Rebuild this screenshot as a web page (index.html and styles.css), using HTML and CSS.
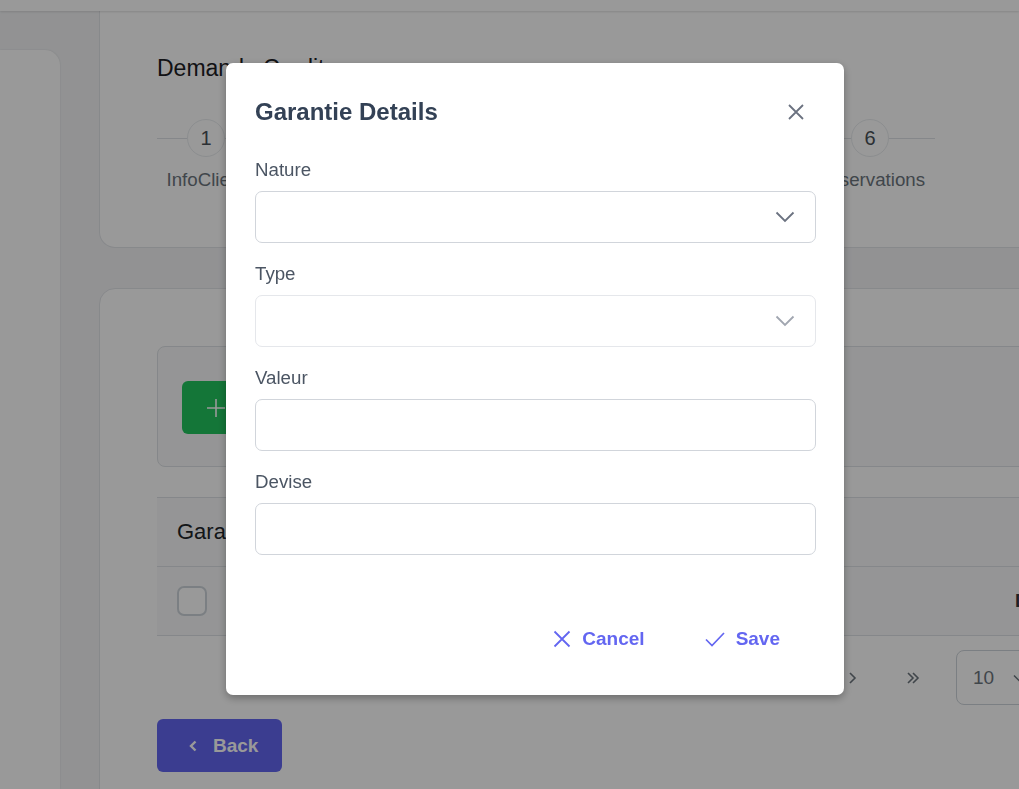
FILE: index.html
```html
<!DOCTYPE html>
<html lang="fr">
<head>
<meta charset="utf-8">
<title>Garantie Details</title>
<link rel="stylesheet" href="styles.css">
</head>
<body>
<header class="topbar"></header>
<div class="layout">
  <aside class="sidebar"></aside>
  <main class="main">
    <section class="card card-steps">
      <h1 class="page-title">Demande Credit</h1>
      <div class="stepper">
        <div class="step"><span class="step-num">1</span><span class="step-label">InfoClient</span></div>
        <div class="step"><span class="step-num">2</span><span class="step-label">Crédit</span></div>
        <div class="step"><span class="step-num">3</span><span class="step-label">Garanties</span></div>
        <div class="step"><span class="step-num">4</span><span class="step-label">Documents</span></div>
        <div class="step"><span class="step-num">5</span><span class="step-label">Validation</span></div>
        <div class="step"><span class="step-num">6</span><span class="step-label">Observations</span></div>
      </div>
    </section>

    <section class="card card-table">
      <div class="toolbar">
        <button class="btn-add">
          <svg width="20" height="20" viewBox="0 0 20 20"><path d="M10 1v18M1 10h18" stroke="currentColor" stroke-width="1.6" fill="none"/></svg>
          <span>Ajouter</span>
        </button>
      </div>
      <div class="table">
        <div class="table-caption">Garanties</div>
        <div class="table-head">
          <span class="checkbox"></span>
          <span class="th">Nature</span>
          <span class="th">Type</span>
          <span class="th">Valeur</span>
          <span class="th">Devise</span>
        </div>
        <div class="paginator">
          <span class="pg-btn">
            <svg width="14" height="14" viewBox="0 0 14 14"><path d="M7 2 2 7l5 5M12 2 7 7l5 5" stroke="currentColor" stroke-width="1.6" fill="none"/></svg>
          </span>
          <span class="pg-btn">
            <svg width="14" height="14" viewBox="0 0 14 14"><path d="M9 2 4 7l5 5" stroke="currentColor" stroke-width="1.6" fill="none"/></svg>
          </span>
          <span class="pg-btn pg-page">1</span>
          <span class="pg-btn">
            <svg width="14" height="14" viewBox="0 0 14 14"><path d="M5 2l5 5-5 5" stroke="currentColor" stroke-width="1.6" fill="none"/></svg>
          </span>
          <span class="pg-btn">
            <svg width="14" height="14" viewBox="0 0 14 14"><path d="M2 2l5 5-5 5M7 2l5 5-5 5" stroke="currentColor" stroke-width="1.6" fill="none"/></svg>
          </span>
          <span class="pg-select">
            <span>10</span>
            <svg width="14" height="14" viewBox="0 0 14 14"><path d="M1 4.5l6 6 6-6" stroke="currentColor" stroke-width="1.5" fill="none"/></svg>
          </span>
        </div>
      </div>
      <button class="btn-back">
        <svg width="10" height="14" viewBox="0 0 10 14"><path d="M7.5 2.5 3 7l4.5 4.5" stroke="currentColor" stroke-width="2.4" fill="none"/></svg>
        <span>Back</span>
      </button>
    </section>
  </main>
</div>

<div class="overlay">
  <div class="modal" role="dialog">
    <div class="modal-header">
      <h2 class="modal-title">Garantie Details</h2>
      <button class="modal-close" aria-label="Close">
        <svg width="18" height="18" viewBox="0 0 18 18"><path d="M2 2l14 14M16 2 2 16" stroke="currentColor" stroke-width="1.8" fill="none"/></svg>
      </button>
    </div>
    <div class="modal-body">
      <div class="field">
        <label class="field-label">Nature</label>
        <div class="input select">
          <svg width="20" height="12" viewBox="0 0 20 12"><path d="M1.5 1.5 10 10l8.5-8.5" stroke="currentColor" stroke-width="1.8" fill="none"/></svg>
        </div>
      </div>
      <div class="field">
        <label class="field-label">Type</label>
        <div class="input select disabled">
          <svg width="20" height="12" viewBox="0 0 20 12"><path d="M1.5 1.5 10 10l8.5-8.5" stroke="currentColor" stroke-width="1.8" fill="none"/></svg>
        </div>
      </div>
      <div class="field">
        <label class="field-label">Valeur</label>
        <div class="input"></div>
      </div>
      <div class="field">
        <label class="field-label">Devise</label>
        <div class="input"></div>
      </div>
    </div>
    <div class="modal-footer">
      <button class="btn-text">
        <svg width="18" height="18" viewBox="0 0 18 18"><path d="M1.5 1.5l15 15M16.5 1.5l-15 15" stroke="currentColor" stroke-width="1.8" fill="none"/></svg>
        <span>Cancel</span>
      </button>
      <button class="btn-text">
        <svg width="20" height="16" viewBox="0 0 20 16"><path d="M1 8.5l6 6L19 2" stroke="currentColor" stroke-width="1.7" fill="none"/></svg>
        <span>Save</span>
      </button>
    </div>
  </div>
</div>
</body>
</html>
```

FILE: styles.css
```css
* { box-sizing: border-box; }

html, body {
  margin: 0;
  height: 100%;
}

body {
  font-family: "Liberation Sans", Arial, sans-serif;
  background: #f3f4f6;
  color: #212529;
  overflow: hidden;
  width: 1019px;
  height: 789px;
}

button {
  font-family: inherit;
  border: none;
  background: none;
  padding: 0;
  cursor: pointer;
}

.topbar {
  height: 11px;
  background: #ffffff;
  box-shadow: 0 1px 2px rgba(0, 0, 0, 0.12);
  position: relative;
  z-index: 1;
}

.layout {
  display: flex;
  gap: 39px;
  height: 778px;
}

.sidebar {
  width: 60px;
  flex: none;
  margin-top: 39px;
  background: #ffffff;
  border-radius: 0 15px 0 0;
  box-shadow: 0 0 2px rgba(0, 0, 0, 0.12);
}

.main {
  flex: 1;
  margin-right: -81px;
  min-width: 0;
}

.card {
  background: #ffffff;
  border: 1px solid #e2e4e8;
  border-radius: 16px;
}

.card-steps {
  border-top: none;
  border-radius: 0 0 0 16px;
  padding: 43px 57px 56px;
}

.page-title {
  margin: 0;
  font-size: 23px;
  line-height: 28px;
  font-weight: 400;
  color: #1d2125;
}

.stepper {
  display: flex;
  justify-content: space-between;
  width: 764px;
  margin: 37px 0 0 -1px;
  position: relative;
}

.stepper::before {
  content: "";
  position: absolute;
  left: 1px;
  right: -15px;
  top: 19px;
  border-top: 1px solid #dee2e6;
}

.step {
  width: 100px;
  display: flex;
  flex-direction: column;
  align-items: center;
  position: relative;
}

.step-num {
  width: 38px;
  height: 38px;
  border-radius: 50%;
  border: 1px solid #e9ecef;
  background: #ffffff;
  display: flex;
  align-items: center;
  justify-content: center;
  font-size: 20px;
  color: #495057;
}

.step-label {
  margin-top: 12px;
  font-size: 18.7px;
  line-height: 22px;
  color: #6c757d;
  white-space: nowrap;
}

.card-table {
  margin-top: 40px;
  padding: 57px 57px 40px;
  border-radius: 16px 16px 0 0;
}

.toolbar {
  height: 121px;
  background: #f8f9fa;
  border: 1px solid #dee2e6;
  border-radius: 8px;
  padding: 34px 24px 0;
}

.btn-add {
  height: 53px;
  display: inline-flex;
  align-items: center;
  gap: 12px;
  padding: 0 24px;
  background: #22c55e;
  color: #ffffff;
  border-radius: 6px;
  font-size: 19px;
  font-weight: 700;
}

.table {
  margin-top: 30px;
}

.table-caption {
  height: 70px;
  border-top: 1px solid #dee2e6;
  border-bottom: 1px solid #dee2e6;
  background: #f8f9fa;
  display: flex;
  align-items: center;
  padding-left: 20px;
  font-size: 22px;
  color: #212529;
}

.table-head {
  height: 69px;
  border-bottom: 1px solid #dee2e6;
  background: #f8f9fa;
  display: grid;
  grid-template-columns: 60px 259px 259px 260px 1fr;
  align-items: center;
  padding-left: 20px;
}

.checkbox {
  width: 30px;
  height: 30px;
  border: 2px solid #ced4da;
  border-radius: 7px;
  background: #ffffff;
}

.th {
  font-size: 19px;
  font-weight: 700;
  color: #343a40;
  white-space: nowrap;
}

.paginator {
  display: flex;
  justify-content: flex-end;
  align-items: center;
  gap: 13px;
  padding-top: 14px;
}

.pg-btn {
  width: 48px;
  height: 48px;
  display: flex;
  align-items: center;
  justify-content: center;
  color: #6c757d;
  font-size: 19px;
}

.pg-page {
  color: #4338ca;
}

.pg-select {
  margin-left: 6px;
  width: 86px;
  height: 55px;
  border: 1px solid #ced4da;
  border-radius: 8px;
  display: flex;
  align-items: center;
  justify-content: space-between;
  padding: 0 14px 0 16px;
  font-size: 19px;
  color: #6c757d;
  background: #ffffff;
}

.btn-back {
  margin-top: 14px;
  width: 125px;
  height: 53px;
  border-radius: 6px;
  background: #6366f1;
  color: #ffffff;
  display: flex;
  align-items: center;
  gap: 15px;
  padding-left: 31px;
  font-size: 19px;
  font-weight: 700;
}

/* Modal */
.overlay {
  position: fixed;
  inset: 0;
  background: rgba(0, 0, 0, 0.4);
  display: flex;
  align-items: flex-start;
  justify-content: flex-start;
  padding: 63px 0 0 226px;
  z-index: 10;
}

.modal {
  width: 618px;
  height: 632px;
  background: #ffffff;
  border-radius: 7px;
  box-shadow: 0 3px 8px rgba(0, 0, 0, 0.3);
  padding: 35px 28px 0 29px;
  display: flex;
  flex-direction: column;
}

.modal-header {
  display: flex;
  align-items: center;
  justify-content: space-between;
  height: 28px;
}

.modal-title {
  margin: 0;
  font-size: 24px;
  line-height: 28px;
  font-weight: 700;
  color: #334155;
}

.modal-close {
  width: 32px;
  height: 32px;
  margin-right: 4px;
  display: flex;
  align-items: center;
  justify-content: center;
  color: #6b7280;
}

.modal-body {
  margin-top: 33px;
  display: flex;
  flex-direction: column;
  gap: 20px;
}

.field {
  display: flex;
  flex-direction: column;
}

.field-label {
  font-size: 18.7px;
  line-height: 22px;
  color: #4b5563;
  margin-bottom: 10px;
}

.input {
  height: 52px;
  border: 1px solid #d1d5db;
  border-radius: 7px;
  background: #ffffff;
}

.select {
  display: flex;
  align-items: center;
  justify-content: flex-end;
  padding-right: 20px;
  color: #6b7280;
}

.select.disabled {
  border-color: #e5e7eb;
  color: #a1a6b0;
}

.modal-footer {
  margin-top: 60px;
  display: flex;
  justify-content: flex-end;
  margin-right: 6px;
}

.btn-text {
  height: 48px;
  display: flex;
  align-items: center;
  gap: 11px;
  padding: 0 30px;
  color: #6366f1;
  font-size: 19px;
  font-weight: 700;
}
```
